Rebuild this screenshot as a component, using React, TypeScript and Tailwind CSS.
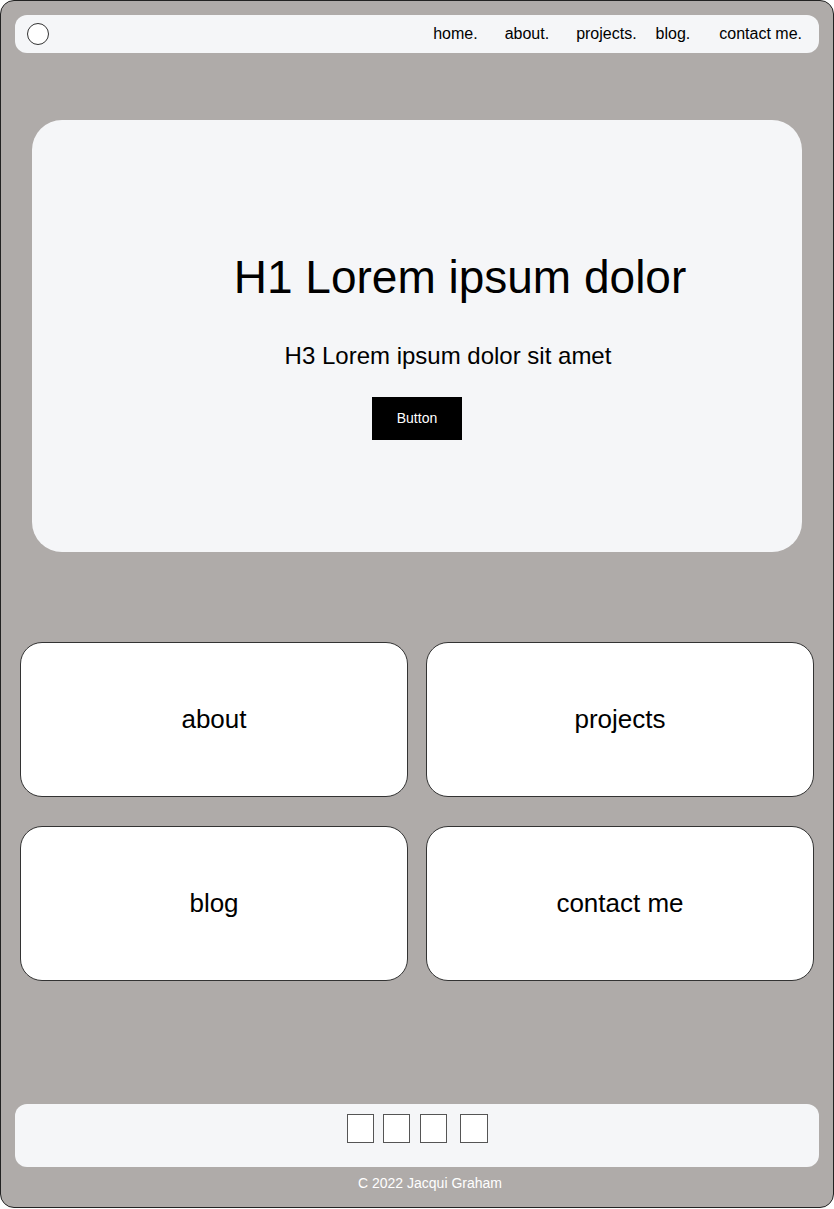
import React from 'react';

const navLinks = [
  { label: 'home.', cls: '' },
  { label: 'about.', cls: 'ml-[27px]' },
  { label: 'projects.', cls: 'ml-[27px]' },
  { label: 'blog.', cls: 'ml-[19px]' },
  { label: 'contact me.', cls: 'ml-[29px]' },
];

const cards = ['about', 'projects', 'blog', 'contact me'];

const App: React.FC = () => {
  return (
    <div className="w-[834px] h-[1209px] bg-white font-['Liberation_Sans',Arial,sans-serif]">
      <div className="relative flex h-[1208px] w-[834px] flex-col rounded-[14px] border border-[#222] bg-[#afaba9]">
        {/* nav */}
        <nav className="mx-[14px] mt-[14px] flex h-[38px] items-center rounded-[12px] bg-[#f5f6f8] pl-[12px] pr-[17px]">
          <div className="h-[22px] w-[22px] rounded-full border border-[#333] bg-white" />
          <div className="ml-auto flex items-center text-[16px] leading-none text-black">
            {navLinks.map((l) => (
              <span key={l.label} className={l.cls}>
                {l.label}
              </span>
            ))}
          </div>
        </nav>

        {/* hero */}
        <section className="mx-[31px] mt-[67px] flex h-[432px] flex-col items-center rounded-[30px] bg-[#f5f6f8]">
          <h1 className="mt-[131px] pl-[86px] text-[46px] leading-[52px] text-black">H1 Lorem ipsum dolor</h1>
          <h3 className="mt-[39px] pl-[62px] text-[24px] leading-[28px] text-black">H3 Lorem ipsum dolor sit amet</h3>
          <button className="mt-[27px] h-[43px] w-[90px] bg-black text-[14px] text-white">Button</button>
        </section>

        {/* cards */}
        <div className="mx-[19px] mt-[90px] grid grid-cols-2 gap-x-[18px] gap-y-[29px]">
          {cards.map((c) => (
            <div
              key={c}
              className="flex h-[155px] items-center justify-center rounded-[22px] border border-[#333] bg-white text-[26px] text-black"
            >
              {c}
            </div>
          ))}
        </div>

        {/* footer */}
        <footer className="mx-[14px] mt-auto flex h-[63px] items-start justify-center rounded-[12px] bg-[#f5f6f8] pt-[10px]">
          <div className="flex">
            <div className="h-[29px] w-[27px] border border-[#555] bg-white" />
            <div className="ml-[9px] h-[29px] w-[27px] border border-[#555] bg-white" />
            <div className="ml-[10px] h-[29px] w-[27px] border border-[#555] bg-white" />
            <div className="ml-[13px] h-[29px] w-[28px] border border-[#555] bg-white" />
          </div>
        </footer>
        <p className="mb-[16px] mt-[8px] pl-[26px] text-center text-[14px] leading-[16px] text-white">C 2022 Jacqui Graham</p>
      </div>
    </div>
  );
};

export default App;
